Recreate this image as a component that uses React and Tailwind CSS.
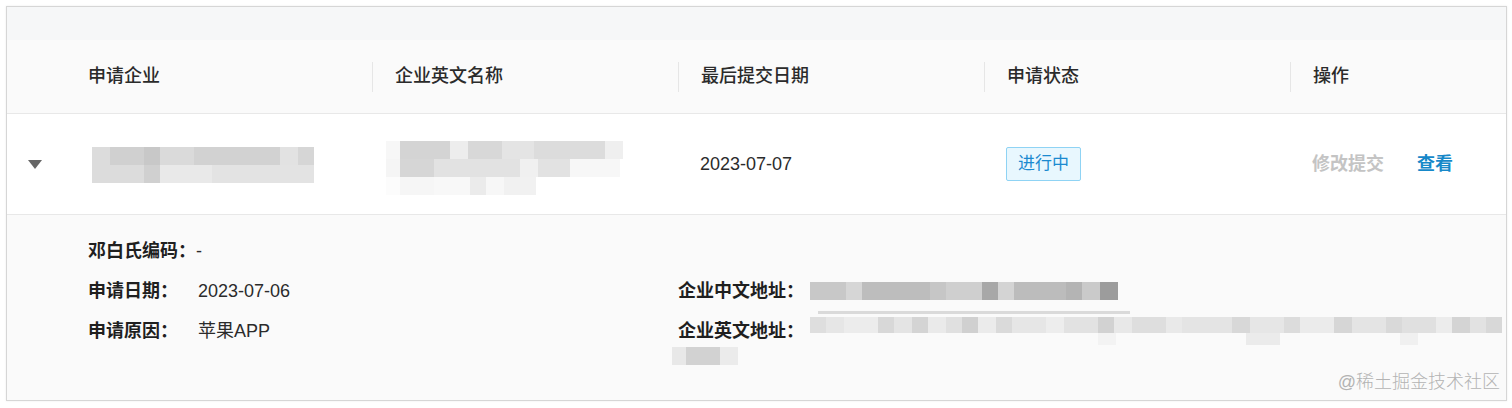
import React from 'react';

const nameCells = [
  [
    [18, 'bg-[#dcdcdc]'], [34, 'bg-[#d0d0d0]'], [16, 'bg-[#c8c8c8]'], [34, 'bg-[#dadada]'],
    [86, 'bg-[#d2d2d2]'], [18, 'bg-[#e2e2e2]'], [16, 'bg-[#d6d6d6]'],
  ],
  [
    [52, 'bg-[#dcdcdc]'], [16, 'bg-[#d0d0d0]'], [52, 'bg-[#e9e9e9]'], [102, 'bg-[#e3e3e3]'],
  ],
];

const enNameCells = [
  [
    [14, 'bg-[#f7f7f7]'], [50, 'bg-[#d4d4d4]'], [18, 'bg-[#ededed]'], [34, 'bg-[#d8d8d8]'],
    [32, 'bg-[#e4e4e4]'], [71, 'bg-[#dcdcdc]'], [18, 'bg-[#efefef]'],
  ],
  [
    [14, 'bg-[#f5f5f5]'], [34, 'bg-[#d6d6d6]'], [86, 'bg-[#e2e2e2]'], [18, 'bg-[#f0f0f0]'],
    [32, 'bg-[#e2e2e2]'], [50, 'bg-[#f7f7f7]'],
  ],
  [
    [14, 'bg-[#fcfcfc]'], [34, 'bg-[#f6f6f6]'], [36, 'bg-[#f8f8f8]'], [16, 'bg-[#ebebeb]'],
    [18, 'bg-[#f7f7f7]'], [32, 'bg-[#f1f1f1]'],
  ],
];

const cnAddrCells = [
  [36, 'bg-[#c8c8c8]'], [16, 'bg-[#d6d6d6]'], [68, 'bg-[#bdbdbd]'], [16, 'bg-[#c6c6c6]'],
  [36, 'bg-[#cfcfcf]'], [16, 'bg-[#a8a8a8]'], [16, 'bg-[#d4d4d4]'], [52, 'bg-[#bcbcbc]'],
  [16, 'bg-[#b4b4b4]'], [18, 'bg-[#cacaca]'], [18, 'bg-[#9c9c9c]'],
];

const enAddrCells = [
  [16, 'bg-[#dedede]'], [18, 'bg-[#e6e6e6]'], [34, 'bg-[#ececec]'], [16, 'bg-[#d8d8d8]'],
  [18, 'bg-[#e4e4e4]'], [16, 'bg-[#d4d4d4]'], [18, 'bg-[#eaeaea]'], [16, 'bg-[#e0e0e0]'],
  [16, 'bg-[#d0d0d0]'], [18, 'bg-[#ebebeb]'], [16, 'bg-[#dadada]'], [34, 'bg-[#e6e6e6]'],
  [18, 'bg-[#ededed]'], [34, 'bg-[#e2e2e2]'], [16, 'bg-[#d2d2d2]'], [18, 'bg-[#e8e8e8]'],
  [34, 'bg-[#dedede]'], [16, 'bg-[#e9e9e9]'], [50, 'bg-[#e4e4e4]'], [18, 'bg-[#d8d8d8]'],
  [34, 'bg-[#e6e6e6]'], [16, 'bg-[#dcdcdc]'], [34, 'bg-[#ebebeb]'], [18, 'bg-[#d6d6d6]'],
  [34, 'bg-[#e4e4e4]'], [16, 'bg-[#d9d9d9]'], [34, 'bg-[#e0e0e0]'], [16, 'bg-[#ececec]'],
  [18, 'bg-[#d4d4d4]'], [16, 'bg-[#e2e2e2]'], [16, 'bg-[#d8d8d8]'],
];

const enAddrWrap = [[14, 'bg-[#e8e8e8]'], [34, 'bg-[#d2d2d2]'], [18, 'bg-[#ebebeb]']];

const Strip = ({ cells, h }) => (
  <div className="flex">
    {cells.map(([w, cls], i) => (
      <div key={i} className={`${h} ${cls}`} style={{ width: w }} />
    ))}
  </div>
);

const Mosaic = ({ rows }) => (
  <div className="flex flex-col">
    {rows.map((cells, i) => (
      <Strip key={i} cells={cells} h="h-[18px]" />
    ))}
  </div>
);

const HeaderCell = ({ children, divider }) => (
  <div className="flex items-center h-full">
    {divider && <div className="w-px h-[30px] bg-[#e6e6e6]" />}
    <span className="ml-[22px] text-[18px] font-medium text-[#2b2b2b]">{children}</span>
  </div>
);

const App = () => {
  return (
    <div className="w-[1512px] h-[408px] bg-white pt-[6px] pl-[6px]" style={{ fontFamily: '"Liberation Sans", "Noto Sans CJK SC", sans-serif' }}>
      <div className="relative w-[1501px] h-[395px] border border-[#d6d6d6] shadow-[0_0_2px_rgba(0,0,0,0.08)] bg-white overflow-hidden">
        {/* top bar */}
        <div className="h-[33px] bg-[#f6f7f8]" />

        {/* header */}
        <div className="grid grid-cols-[59px_306px_306px_306px_306px_1fr] h-[74px] bg-[#fafafa] border-b border-[#e8e8e8]">
          <div />
          <HeaderCell>申请企业</HeaderCell>
          <HeaderCell divider>企业英文名称</HeaderCell>
          <HeaderCell divider>最后提交日期</HeaderCell>
          <HeaderCell divider>申请状态</HeaderCell>
          <HeaderCell divider>操作</HeaderCell>
        </div>

        {/* data row */}
        <div className="grid grid-cols-[59px_306px_306px_306px_306px_1fr] h-[101px] bg-white border-b border-[#e8e8e8] items-center">
          <div className="flex justify-center pr-[4px]">
            <svg width="14" height="9" viewBox="0 0 14 9">
              <polygon points="0,0 14,0 7,9" fill="#666666" />
            </svg>
          </div>
          <div className="pl-[26px] pt-[2px]">
            <Mosaic rows={nameCells} />
          </div>
          <div className="pl-[14px] pt-[8px]">
            <Mosaic rows={enNameCells} />
          </div>
          <div className="pl-[22px] text-[18px] text-[#2b2b2b]">2023-07-07</div>
          <div className="pl-[22px]">
            <span className="inline-block px-[11px] h-[34px] leading-[32px] text-[17px] text-[#1b8ad0] bg-[#e8f7fe] border border-[#8fd3f4] rounded-[2px]">
              进行中
            </span>
          </div>
          <div className="pl-[22px] flex items-center gap-[33px] text-[18px] font-semibold">
            <span className="text-[#c4c4c4]">修改提交</span>
            <span className="text-[#1688c9]">查看</span>
          </div>
        </div>

        {/* expanded */}
        <div className="h-[185px] bg-[#fafafa] pt-[22px] pl-[81px] pr-[2px]">
          <div className="grid grid-cols-[590px_1fr] gap-y-[12px] text-[18px] leading-[28px] text-[#2b2b2b]">
            <div>
              <span className="font-semibold text-[#1f1f1f]">邓白氏编码：</span>
              <span>-</span>
            </div>
            <div />
            <div className="flex">
              <span className="w-[110px] font-semibold text-[#1f1f1f]">申请日期：</span>
              <span>2023-07-06</span>
            </div>
            <div className="flex items-center">
              <span className="font-semibold text-[#1f1f1f]">企业中文地址：</span>
              <div className="ml-[6px]">
                <Strip cells={cnAddrCells} h="h-[18px]" />
              </div>
            </div>
            <div className="flex">
              <span className="w-[110px] font-semibold text-[#1f1f1f]">申请原因：</span>
              <span>苹果APP</span>
            </div>
            <div className="-ml-[6px]">
              <div className="flex items-center pl-[6px]">
                <span className="font-semibold text-[#1f1f1f]">企业英文地址：</span>
                <div className="ml-[6px] flex flex-col">
                  <div className="h-[3px] w-[312px] ml-[8px] -mt-[6px] mb-[3px] bg-[#dadada]" />
                  <Strip cells={enAddrCells} h="h-[16px]" />
                  <div className="flex h-[12px]">
                    <div className="w-[288px]" />
                    <div className="w-[18px] bg-[#f3f3f3]" />
                    <div className="w-[130px]" />
                    <div className="w-[34px] bg-[#ebebeb]" />
                    <div className="w-[120px]" />
                    <div className="w-[18px] bg-[#f0f0f0]" />
                  </div>
                </div>
              </div>
              <div className="mt-[2px]">
                <Strip cells={enAddrWrap} h="h-[18px]" />
              </div>
            </div>
          </div>
        </div>

        {/* watermark */}
        <div className="absolute right-[6px] bottom-[4px] text-[18px] text-[#b3b3b3] font-light">
          @稀土掘金技术社区
        </div>
      </div>
    </div>
  );
};

export default App;
